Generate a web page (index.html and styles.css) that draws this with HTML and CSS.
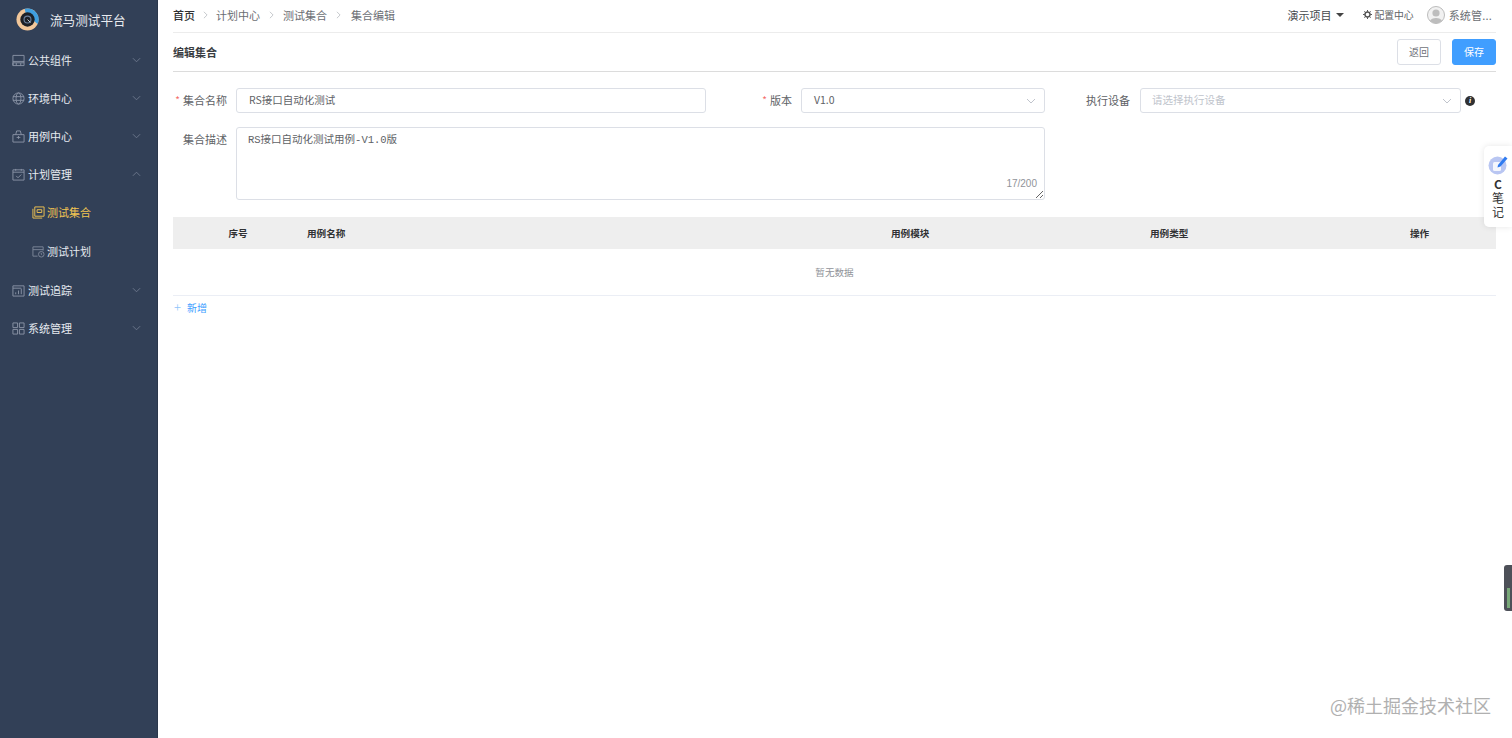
FILE: index.html
```html
<!DOCTYPE html>
<html lang="zh-CN">
<head>
<meta charset="utf-8">
<title>流马测试平台</title>
<link rel="stylesheet" href="styles.css">
</head>
<body>
<div class="app">
  <aside class="sidebar">
    <div class="brand">
      <svg class="logo" viewBox="0 0 24 24"><circle cx="12" cy="12" r="11.5" fill="#f2c79a"/><path d="M9 .9A11.500 11.500 0 0 1 22.500 16.800L17 12 10 5Z" fill="#3f9fe0"/><circle cx="12" cy="12" r="7.500" fill="#1c2026"/><circle cx="12" cy="12" r="3.600" fill="none" stroke="#6b7f9c" stroke-width="1.200"/><path d="M12 12l3 3" stroke="#c9d3e0" stroke-width="1"/></svg>
      <span class="brand-name">流马测试平台</span>
    </div>
    <nav class="menu">
      <div class="item">
        <svg class="ico" viewBox="0 0 14 14"><path d="M1 1.500h12v11H1zM1 8h12M1 12.500V9.500h3.600v3M4.600 9.500h4.800v3M9.400 9.500H13"/></svg>
        <span>公共组件</span>
        <svg class="chev" viewBox="0 0 10 6"><path d="M1 1l4 4 4-4"/></svg>
      </div>
      <div class="item">
        <svg class="ico" viewBox="0 0 14 14"><circle cx="7" cy="7" r="6"/><ellipse cx="7" cy="7" rx="2.600" ry="6"/><path d="M1 5h12M1 9h12"/></svg>
        <span>环境中心</span>
        <svg class="chev" viewBox="0 0 10 6"><path d="M1 1l4 4 4-4"/></svg>
      </div>
      <div class="item">
        <svg class="ico" viewBox="0 0 14 14"><path d="M1 5h12v8H1zM4 5l1-4h4l1 4M5 8h4M7 6.500v3"/></svg>
        <span>用例中心</span>
        <svg class="chev" viewBox="0 0 10 6"><path d="M1 1l4 4 4-4"/></svg>
      </div>
      <div class="item">
        <svg class="ico" viewBox="0 0 14 14"><path d="M1 2h12v11H1zM1 4.500h12M4 1v2M10 1v2M4.500 8.500l2 2 3.500-3.500"/></svg>
        <span>计划管理</span>
        <svg class="chev" viewBox="0 0 10 6"><path d="M1 5l4-4 4 4"/></svg>
      </div>
      <div class="subitem active">
        <svg class="ico" viewBox="0 0 14 14"><path d="M1 3v10h10M3 1h10v10H3zM5.500 4h5v3h-5z"/></svg>
        <span>测试集合</span>
      </div>
      <div class="subitem">
        <svg class="ico" viewBox="0 0 14 14"><path d="M12 6V2H1v10h5M1 5h11"/><circle cx="10" cy="10" r="3"/><path d="M10 8.500V10l1 .8"/></svg>
        <span>测试计划</span>
      </div>
      <div class="item">
        <svg class="ico" viewBox="0 0 14 14"><path d="M1 2h12v11H1zM1 4.500h9M4 11V9M7 11V7M10 11V5"/></svg>
        <span>测试追踪</span>
        <svg class="chev" viewBox="0 0 10 6"><path d="M1 1l4 4 4-4"/></svg>
      </div>
      <div class="item">
        <svg class="ico" viewBox="0 0 14 14"><path d="M1 1h5v5H1zM8 1h5v5H8zM1 8h5v5H1zM8 8h5v5H8z"/></svg>
        <span>系统管理</span>
        <svg class="chev" viewBox="0 0 10 6"><path d="M1 1l4 4 4-4"/></svg>
      </div>
    </nav>
  </aside>

  <main class="main">
    <header class="topbar">
      <div class="crumbs">
        <span class="crumb-home">首页</span>
        <svg class="sep sep-first" viewBox="0 0 6 10"><path d="M1 1l4 4-4 4"/></svg>
        <span>计划中心</span>
        <svg class="sep" viewBox="0 0 6 10"><path d="M1 1l4 4-4 4"/></svg>
        <span>测试集合</span>
        <svg class="sep sep-last" viewBox="0 0 6 10"><path d="M1 1l4 4-4 4"/></svg>
        <span>集合编辑</span>
      </div>
      <div class="tools">
        <span class="project">演示项目</span>
        <span class="caret"></span>
        <svg class="gear" viewBox="0 0 10 10"><circle cx="5" cy="5" r="2.800" fill="none" stroke="#555" stroke-width="1.600"/><path d="M5 0v2M5 8v2M0 5h2M8 5h2M1.500 1.500l1.400 1.400M7.100 7.100l1.400 1.400M8.500 1.500L7.100 2.900M2.900 7.100L1.500 8.500" stroke="#555" stroke-width="1.100"/></svg>
        <span class="config">配置中心</span>
        <svg class="avatar" viewBox="0 0 18 18"><circle cx="9" cy="9" r="8.500" fill="#f1f1f1" stroke="#bbb"/><circle cx="9" cy="7" r="3.600" fill="#bdbdbd"/><path d="M3 15c1-4 11-4 12 0a8.500 8.500 0 0 1-12 0z" fill="#bdbdbd"/></svg>
        <span class="user">系统管...</span>
      </div>
    </header>

    <section class="titlebar">
      <h1 class="title">编辑集合</h1>
      <div class="actions">
        <button class="btn">返回</button>
        <button class="btn primary">保存</button>
      </div>
    </section>

    <form class="form">
      <label class="label"><i>*</i>集合名称</label>
      <div class="field">RS接口自动化测试</div>
      <label class="label"><i>*</i>版本</label>
      <div class="field select">V1.0<svg class="arrow" viewBox="0 0 10 6"><path d="M1 1l4 4 4-4"/></svg></div>
      <label class="label label-device">执行设备</label>
      <div class="device">
        <div class="field select placeholder">请选择执行设备<svg class="arrow" viewBox="0 0 10 6"><path d="M1 1l4 4 4-4"/></svg></div>
        <span class="info">i</span>
      </div>
      <label class="label label-top">集合描述</label>
      <div class="area-wrap">
        <textarea class="area">RS接口自动化测试用例-V1.0版</textarea>
        <span class="count">17/200</span>
      </div>
    </form>

    <div class="table">
      <div class="thead">
        <div class="th center">序号</div>
        <div class="th">用例名称</div>
        <div class="th">用例模块</div>
        <div class="th">用例类型</div>
        <div class="th">操作</div>
      </div>
      <div class="empty">暂无数据</div>
    </div>
    <div class="add"><span class="plus">+</span>新增</div>
  </main>
</div>

<div class="note">
  <svg class="note-ico" viewBox="0 0 20 20"><circle cx="9.500" cy="10.500" r="9" fill="#b9c6f2"/><rect x="5" y="7" width="8" height="9" rx="1.500" fill="#f4f6fd"/><path d="M10 10L17 1.500l2.500 2L12.500 11.500l-3 1z" fill="#2f7bf0"/></svg>
  <span class="note-c">C</span><span>笔</span><span>记</span>
</div>
<div class="handle"><span class="handle-bar"></span></div>
<div class="watermark">@稀土掘金技术社区</div>
</body>
</html>
```

FILE: styles.css
```css
* { box-sizing: border-box; }
html, body { margin: 0; height: 738px; overflow: hidden; background: #fff; }
body { font-family: "Noto Sans CJK SC", "Liberation Sans", sans-serif; font-size: 11px; color: #606266; }

.app { display: flex; height: 738px; }

.sidebar { width: 158px; flex: none; background: #324057; color: #e6eaf0; border-right: 1px solid #2b374b; }
.brand { height: 41px; display: flex; align-items: center; padding: 0 0 3px 16px; gap: 11px; }
.logo { width: 23px; height: 23px; flex: none; }
.brand-name { font-size: 12.600px; color: #e8ebf0; }
.item, .subitem { display: flex; align-items: center; }
.item { height: 38px; padding-left: 12px; gap: 3px; }
.subitem { height: 39px; padding-left: 32px; padding-bottom: 1px; gap: 2px; }
.ico { width: 13px; height: 13px; flex: none; fill: none; stroke: #8a94a6; stroke-width: 1; }
.chev { width: 9px; height: 6px; margin-left: auto; margin-right: 16px; fill: none; stroke: #6f7b8f; stroke-width: 1; }
.subitem .ico { stroke: #7d8799; }
.subitem.active { color: #f3c552; }
.subitem.active .ico { stroke: #f3c552; }

.main { flex: 1; min-width: 0; padding: 0 16px 0 15px; }

.topbar { height: 33px; display: flex; justify-content: space-between; align-items: center; border-bottom: 1px solid #ececec; padding-bottom: 3px; }
.crumbs { display: flex; align-items: center; color: #6b6e73; }
.crumb-home { color: #303133; font-weight: 500; }
.sep { width: 5px; height: 8px; margin: 0 9px 0 9px; fill: none; stroke: #b8bbc0; stroke-width: 1; }
.sep-first { margin: 0 8px; }
.sep-last { margin: 0 10px 0 9px; }
.tools { display: flex; align-items: center; margin-right: 4px; }
.project { color: #45484d; }
.caret { width: 0; height: 0; margin-left: 5px; border-left: 4px solid transparent; border-right: 4px solid transparent; border-top: 4.500px solid #444; }
.gear { width: 9px; height: 9px; margin-left: 19px; }
.config { font-size: 9.800px; margin-left: 2px; color: #606266; }
.avatar { width: 18px; height: 18px; margin-left: 13px; }
.user { margin-left: 4px; font-size: 11px; letter-spacing: .2px; color: #6b6e73; }

.titlebar { height: 39px; display: flex; justify-content: space-between; align-items: center; border-bottom: 1px solid #dcdcdc; padding-bottom: 1px; }
.title { margin: 0; font-size: 11px; font-weight: 700; color: #3a3d42; }
.actions { display: flex; gap: 11px; }
.btn { width: 44px; height: 26px; padding: 0; border: 1px solid #dcdfe6; border-radius: 3px; background: #fff; font: 10px "Noto Sans CJK SC", sans-serif; color: #70737a; }
.btn.primary { background: #409eff; border-color: #409eff; color: #fff; }

.form { display: grid; grid-template-columns: 63px 470px 95px 244px 95px 356px; grid-auto-rows: min-content; row-gap: 14px; margin-top: 16px; }
.label { display: flex; align-items: center; justify-content: flex-end; padding-right: 9px; padding-bottom: 2px; color: #606266; height: 25px; }
.label-device { padding-right: 10px; }
.label i { color: #f56c6c; font-style: normal; margin-right: 3px; font-size: 10px; }
.field { height: 25px; display: flex; align-items: center; padding: 0 12px 2px 12px; border: 1px solid #dcdfe6; border-radius: 3px; color: #606266; background: #fff; position: relative; font-size: 10.500px; }
.select { justify-content: flex-start; }
.placeholder { color: #c0c4cc; padding-left: 11px; flex: none; width: 321px; }
.arrow { position: absolute; right: 8px; top: 9px; width: 10px; height: 6px; fill: none; stroke: #c0c4cc; stroke-width: 1; }
.device { display: flex; align-items: center; gap: 4px; }
.info { width: 10px; height: 10px; border-radius: 50%; background: #303133; color: #fff; font: italic 700 8px/10px "Liberation Serif", serif; text-align: center; }
.label-top { height: 25px; }
.area-wrap { grid-column: 2 / 5; position: relative; height: 73px; display: flex; }
.area { width: 100%; height: 73px; padding: 5px 11px; border: 1px solid #dcdfe6; border-radius: 3px; font: 10.500px/15px "Liberation Mono", "Noto Sans CJK SC", monospace; color: #606266; background: #fff; resize: vertical; outline: none; }
.count { position: absolute; right: 8px; bottom: 11px; font: 10px "Liberation Sans", sans-serif; color: #909399; }

.table { margin-top: 17px; border-bottom: 1px solid #ebeef5; }
.thead { height: 32px; display: grid; grid-template-columns: 128px 584px 259px 260px 92px; align-items: center; background: #eeeeee; }
.th { padding-left: 6px; font-size: 9.600px; font-weight: 700; color: #303133; }
.th.center { text-align: center; padding-left: 2px; }
.empty { height: 46px; display: flex; align-items: center; justify-content: center; font-size: 9.600px; color: #909399; }
.add { display: flex; align-items: center; height: 14px; margin-top: 4px; padding-left: 1px; color: #409eff; font-size: 10px; }
.plus { width: 13px; font-size: 13px; font-weight: 300; color: #8fc4fa; line-height: 14px; }

.note { position: absolute; right: 0; top: 146px; width: 28px; height: 81px; padding-top: 9px; display: flex; flex-direction: column; align-items: center; background: #fff; border-radius: 5px 0 0 5px; box-shadow: 0 0 6px rgba(0, 0, 0, .1); font-size: 12px; line-height: 14px; color: #333; }
.note-ico { width: 20px; height: 20px; margin-bottom: 2px; }
.note-c { font-weight: 700; }
.handle { position: absolute; right: 0; top: 565px; width: 8px; height: 46px; padding: 23px 2px 3px 3px; background: #4d5058; border-radius: 3px 0 0 3px; }
.handle-bar { display: block; height: 100%; background: #78a878; }
.watermark { position: absolute; left: 1330px; top: 692px; font-size: 18px; line-height: 26px; color: #a8a8a8; opacity: .9; white-space: nowrap; }
```
